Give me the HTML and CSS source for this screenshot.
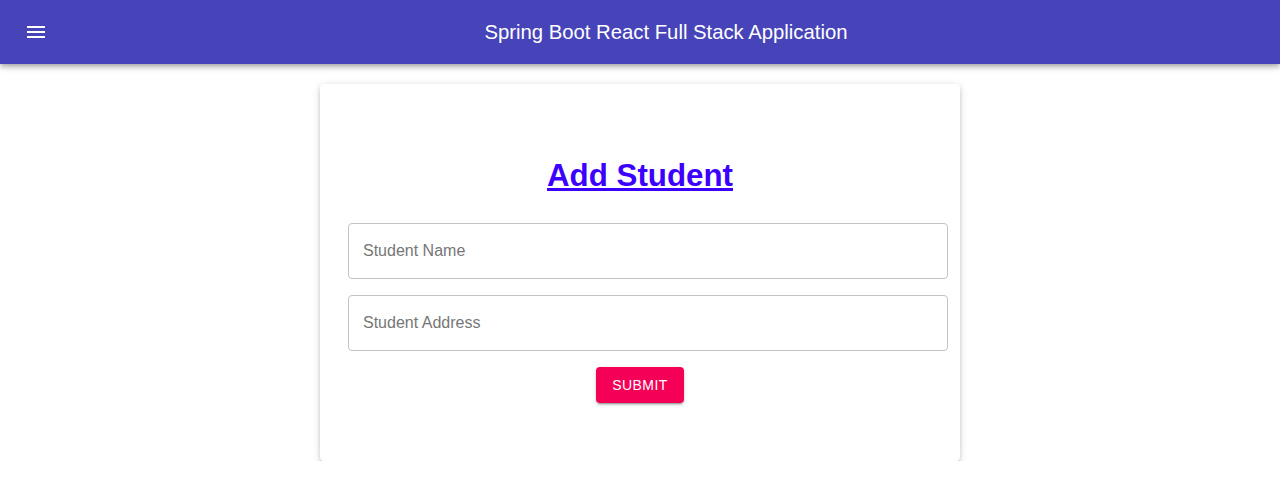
FILE: index.html
```html
<!DOCTYPE html>
<html>
<head>
<meta charset="utf-8">
<link rel="stylesheet" href="styles.css">
</head>
<body>
<header class="appbar">
  <button class="menu-btn" aria-label="menu">
    <svg width="24" height="24" viewBox="0 0 24 24"><path fill="#fff" d="M3 18h18v-2H3v2zm0-5h18v-2H3v2zm0-7v2h18V6H3z"/></svg>
  </button>
  <h1 class="title">Spring Boot React Full Stack Application</h1>
</header>
<main class="container">
  <section class="paper">
    <h2 class="heading">Add Student</h2>
    <form class="form">
      <div class="field"><input type="text" placeholder="Student Name"></div>
      <div class="field"><input type="text" placeholder="Student Address"></div>
      <button type="button" class="submit">Submit</button>
    </form>
  </section>
</main>
</body>
</html>
```
FILE: styles.css
```css
* { box-sizing: border-box; }
body {
  margin: 0;
  background: #fff;
  font-family: "Liberation Sans", Arial, sans-serif;
}
.appbar {
  height: 64px;
  background: #4744b9;
  display: flex;
  align-items: center;
  padding: 0 8px 0 12px;
  box-shadow: 0 2px 4px -1px rgba(0,0,0,0.2), 0 4px 5px 0 rgba(0,0,0,0.14), 0 1px 10px 0 rgba(0,0,0,0.12);
  position: relative;
  z-index: 1;
}
.menu-btn {
  width: 48px;
  height: 48px;
  border: 0;
  background: transparent;
  padding: 12px;
  display: flex;
  align-items: center;
  justify-content: center;
}
.title {
  flex: 1;
  margin: 0;
  text-align: center;
  color: #fff;
  font-size: 20.3px;
  font-weight: 400;
}
.container {
  display: flex;
  justify-content: center;
  padding-top: 20px;
}
.paper {
  width: 640px;
  height: 377px;
  background: #fff;
  border-radius: 4px;
  padding: 52px 12px 0 28px;
  box-shadow: 0 3px 3px -2px rgba(0,0,0,0.2), 0 3px 4px 0 rgba(0,0,0,0.14), 0 1px 8px 0 rgba(0,0,0,0.12);
}
.heading {
  margin: 0;
  text-align: center;
  color: #3b00ff;
  text-decoration: underline;
  font-family: "Liberation Sans", Arial, sans-serif;
  font-size: 31.3px;
  font-weight: 700;
  line-height: 80px;
  height: 80px;
  padding-right: 16px;
}
.form {
  display: flex;
  flex-direction: column;
  align-items: center;
  gap: 16px;
  margin-top: 7px;
}
.field { width: 600px; }
.field input {
  width: 100%;
  height: 56px;
  border: 1px solid #c4c4c4;
  border-radius: 4px;
  padding: 0 14px;
  font-family: "Liberation Sans", Arial, sans-serif;
  font-size: 16px;
  color: #333;
  outline: none;
}
.field input::placeholder { color: #767676; }
.submit {
  width: 88px;
  height: 36px;
  margin-right: 16px;
  border: 0;
  border-radius: 4px;
  background: #f50057;
  color: #fff;
  text-transform: uppercase;
  font-family: "Liberation Sans", Arial, sans-serif;
  font-size: 14px;
  letter-spacing: 0.4px;
  box-shadow: 0 3px 1px -2px rgba(0,0,0,0.2), 0 2px 2px 0 rgba(0,0,0,0.14), 0 1px 5px 0 rgba(0,0,0,0.12);
}
```
